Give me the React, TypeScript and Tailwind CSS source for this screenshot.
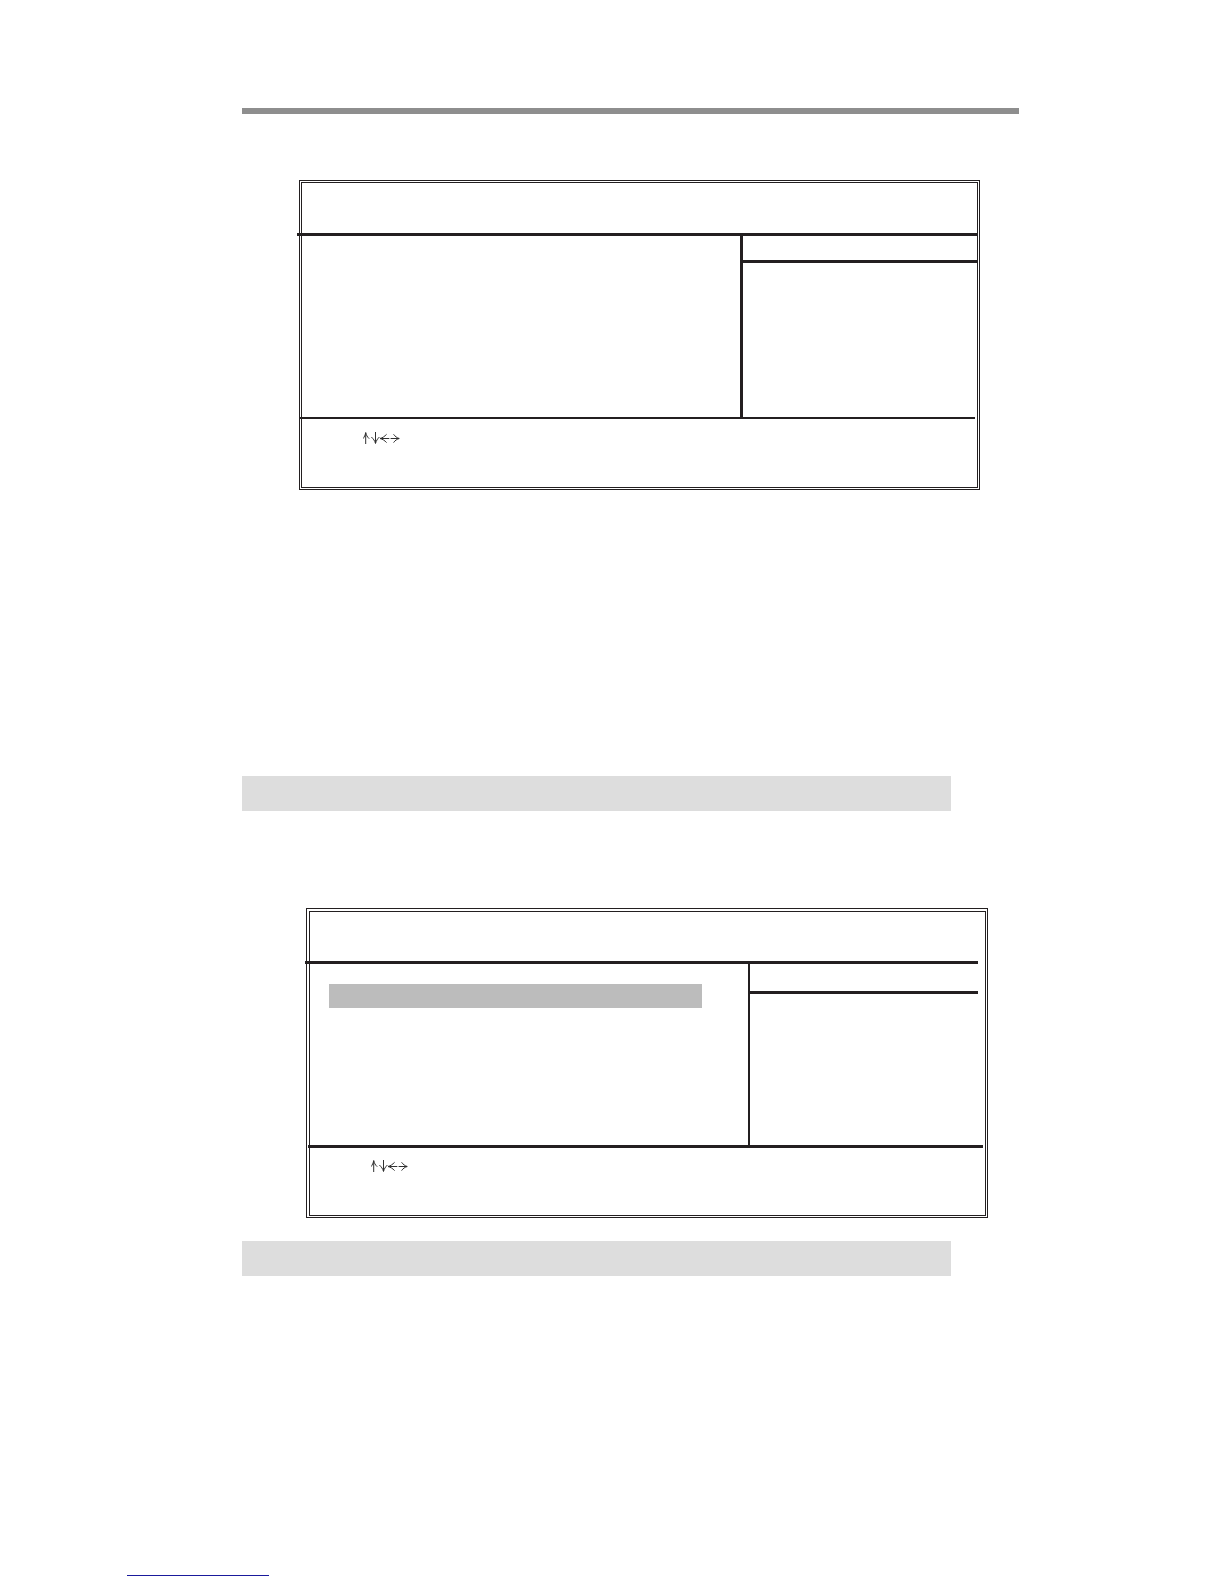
import React from 'react';
import clsx from 'clsx';

interface ScreenPanelProps {
    className?: string;
    gapClass: string;
    headerClass: string;
    headerRuleClass: string;
    asideClass: string;
    asideTitleClass: string;
    footerRuleClass: string;
    footerClass: string;
    children?: React.ReactNode;
}

const ArrowKeys: React.FC = () => (
    <svg
        role="img"
        aria-label="Arrow keys"
        className="block h-3 w-[37px]"
        viewBox="0 0 37 12"
        fill="none"
        stroke="#303030"
        strokeWidth={1}
    >
        {/* up */}
        <path d="M2.7 12V1" />
        <path d="M0 6.7C1.3 5 2.3 3 2.7 0.5C3.1 3 4.4 5 6.2 6.7" />
        {/* down */}
        <path d="M12.5 0V11" />
        <path d="M8.4 5C10.2 6.8 11.9 8.8 12.5 11.5C13.1 8.8 14.6 6.8 16.4 5" />
        {/* left */}
        <path d="M17 6.5H26.3" />
        <path d="M23.6 2.3C21.6 4.4 19.6 5.8 17 6.5C19.6 7.2 21.6 8.4 23.6 10.6" />
        {/* right */}
        <path d="M27.6 6.5H36.2" />
        <path d="M30.6 2.3C32 4.4 34 5.8 36.2 6.5C34 7.2 32 8.4 30.6 10.6" />
    </svg>
);

const ScreenPanel: React.FC<ScreenPanelProps> = ({
    className,
    gapClass,
    headerClass,
    headerRuleClass,
    asideClass,
    asideTitleClass,
    footerRuleClass,
    footerClass,
    children
}) => (
    <section className={clsx('border border-[#231f20]', gapClass, className)}>
        <div className="border border-[#231f20]">
            <header className={headerClass} />
            <div className={clsx('h-[3px] bg-[#231f20]', headerRuleClass)} />

            <div className="flex min-h-[181px]">
                <div className="flex-1">{children}</div>
                <aside className={clsx('w-[237px] border-[#231f20]', asideClass)}>
                    <div className={clsx('border-b-3 border-[#231f20]', asideTitleClass)} />
                </aside>
            </div>

            <div className={clsx('bg-[#231f20]', footerRuleClass)} />
            <footer className={footerClass}>
                <ArrowKeys />
            </footer>
        </div>
    </section>
);

const SectionBar: React.FC<{ className?: string }> = ({ className }) => (
    <div className={clsx('mr-[68px] h-[35px] bg-[#dddddd]', className)} />
);

const App: React.FC = () => {
    return (
        <main className="bg-white pt-[108px] pr-[205px] pb-2 pl-[242px] font-['Liberation_Sans',sans-serif]">
            <div className="h-1.5 bg-[#8e8e8e]" />

            <ScreenPanel
                className="mt-[66px] mr-[39px] ml-[57px]"
                gapClass="p-px"
                headerClass="h-[50px]"
                headerRuleClass="-mr-px -ml-[5px]"
                asideClass="border-l-3"
                asideTitleClass="-mr-px h-[27px]"
                footerRuleClass="mr-0.5 -ml-0.5 h-0.5"
                footerClass="h-[68px] pt-[13px] pl-[61px]"
            />

            <SectionBar className="mt-[286px]" />

            <ScreenPanel
                className="mt-[97px] mr-[31px] ml-16"
                gapClass="pt-0.5 pr-px pb-px pl-0.5"
                headerClass="h-[49px]"
                headerRuleClass="mr-[7px] -ml-[5px]"
                asideClass="border-l-2"
                asideTitleClass="mr-[7px] h-[30px]"
                footerRuleClass="mr-0.5 -ml-0.5 h-[3px]"
                footerClass="h-[67px] pt-3 pl-[61px]"
            >
                {/* Selected row */}
                <div className="mt-5 mr-[46px] ml-[19px] h-6 bg-[#bcbcbc]" />
            </ScreenPanel>

            <SectionBar className="mt-[23px]" />

            <a
                href="#"
                aria-label="Footer link"
                className="mt-[299px] -ml-[115px] block h-px w-[142px] bg-[#1a1a9c]"
            />
        </main>
    );
};

export default App;
